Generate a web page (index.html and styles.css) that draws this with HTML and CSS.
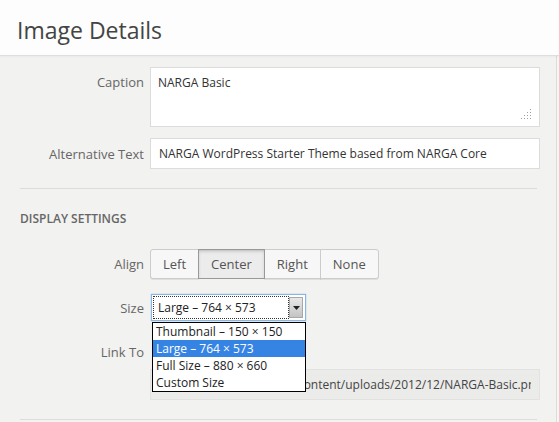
FILE: index.html
```html
<!DOCTYPE html>
<html lang="en">
<head>
<meta charset="utf-8">
<title>Image Details</title>
<link rel="stylesheet" href="styles.css">
</head>
<body>
<div class="frame">
  <header class="header">
    <h1 class="title">Image Details</h1>
  </header>
  <div class="body">
    <main class="pane">
      <div class="row row-caption">
        <label class="label label-top">Caption</label>
        <div class="textarea">
          <span class="field-text">NARGA Basic</span>
          <svg class="grip" width="11" height="11" viewBox="0 0 11 11">
            <g fill="#a0a0a0">
              <rect x="9" y="0" width="1" height="1"/>
              <rect x="9" y="3" width="1" height="1"/>
              <rect x="6" y="3" width="1" height="1"/>
              <rect x="9" y="6" width="1" height="1"/>
              <rect x="6" y="6" width="1" height="1"/>
              <rect x="3" y="6" width="1" height="1"/>
              <rect x="9" y="9" width="1" height="1"/>
              <rect x="6" y="9" width="1" height="1"/>
              <rect x="3" y="9" width="1" height="1"/>
              <rect x="0" y="9" width="1" height="1"/>
            </g>
          </svg>
        </div>
      </div>
      <div class="row row-alt">
        <label class="label">Alternative Text</label>
        <div class="input"><span class="field-text">NARGA WordPress Starter Theme based from NARGA Core</span></div>
      </div>

      <hr class="sep">

      <h3 class="section-title">Display Settings</h3>

      <div class="row row-align">
        <label class="label">Align</label>
        <div class="button-group">
          <span class="btn">Left</span>
          <span class="btn btn-active">Center</span>
          <span class="btn">Right</span>
          <span class="btn">None</span>
        </div>
      </div>

      <div class="row row-size">
        <label class="label">Size</label>
        <div class="select-wrap">
          <div class="select">
            <span class="select-focus">Large – 764 × 573</span>
            <span class="select-arrow">
              <svg width="7" height="4" viewBox="0 0 7 4"><path d="M0 0H7L3.5 4Z" fill="#222"/></svg>
            </span>
          </div>
          <ul class="dropdown">
            <li class="option">Thumbnail – 150 × 150</li>
            <li class="option option-selected">Large – 764 × 573</li>
            <li class="option">Full Size – 880 × 660</li>
            <li class="option">Custom Size</li>
          </ul>
        </div>
      </div>

      <div class="row row-link">
        <label class="label">Link To</label>
        <div class="link-select"></div>
      </div>
      <div class="row row-url">
        <span></span>
        <div class="input input-readonly"><span class="field-text url-text">http://localhost/blog/wp-content/uploads/2012/12/NARGA-Basic.png</span></div>
      </div>

      <hr class="sep sep-bottom">
    </main>
    <div class="edge"></div>
  </div>
</div>
</body>
</html>
```

FILE: styles.css
```css
* {
  box-sizing: border-box;
}

html, body {
  margin: 0;
  padding: 0;
}

body {
  font-family: "Open Sans", "Liberation Sans", sans-serif;
  font-size: 13px;
  color: #444;
  background: #f3f3f2;
}

.frame {
  width: 559px;
  height: 422px;
  overflow: hidden;
  display: flex;
  flex-direction: column;
}

.header {
  height: 56px;
  flex: none;
  background: #fcfdfc;
  border-bottom: 1px solid #dedede;
  box-shadow: 0 1px 2px rgba(0, 0, 0, 0.04);
  display: flex;
  align-items: center;
  padding-left: 17px;
  position: relative;
  z-index: 1;
}

.title {
  margin: 0;
  font-size: 23px;
  font-weight: 400;
  color: #444;
  line-height: 30px;
  padding-top: 5px;
}

.body {
  flex: 1;
  display: flex;
}

.pane {
  width: 557px;
  flex: none;
  background: #f2f2f0;
  border-right: 1px solid #dcdcdc;
  padding-top: 11px;
}

.edge {
  flex: 1;
  background: #f6f6f5;
}

.row {
  display: grid;
  grid-template-columns: 144px 390px;
  column-gap: 6px;
  align-items: center;
}

.label {
  text-align: right;
  color: #666;
  font-size: 13px;
  line-height: 18px;
}

.row-caption {
  align-items: start;
}

.label-top {
  padding-top: 6px;
}

.textarea {
  height: 60px;
  background: #fff;
  border: 1px solid #dcdcdc;
  padding: 6px 7px;
  display: flex;
  flex-direction: column;
  justify-content: space-between;
}

.field-text {
  color: #333;
  font-size: 12px;
  line-height: 18px;
  white-space: nowrap;
}

.grip {
  align-self: flex-end;
  display: block;
}

.row-alt {
  margin-top: 11px;
}

.input {
  height: 31px;
  background: #fff;
  border: 1px solid #dcdcdc;
  padding: 0 8px;
  display: flex;
  align-items: center;
  overflow: hidden;
}

.input-readonly {
  background: #ebebea;
  border-color: #e2e2e1;
}

.url-text {
  color: #444;
  overflow: hidden;
}

.sep {
  margin: 19px 0 0 20px;
  width: 517px;
  height: 0;
  border: 0;
  border-top: 1px solid #dcdcdc;
}

.section-title {
  margin: 21px 0 0 20px;
  font-size: 12px;
  font-weight: 600;
  text-transform: uppercase;
  color: #666;
  line-height: 17px;
}

.row-align {
  margin-top: 22px;
}

.button-group {
  display: flex;
}

.btn {
  height: 30px;
  padding: 0 12px;
  display: flex;
  align-items: center;
  background: #f7f7f7;
  border: 1px solid #cccccc;
  box-shadow: 0 1px 0 rgba(0, 0, 0, 0.08);
  color: #555;
  font-size: 13px;
  margin-left: -1px;
}

.btn:first-child {
  margin-left: 0;
  border-radius: 3px 0 0 3px;
}

.btn:last-child {
  border-radius: 0 3px 3px 0;
}

.btn-active {
  background: #ececec;
  border-color: #999;
  box-shadow: inset 0 2px 5px -3px rgba(0, 0, 0, 0.5);
  position: relative;
  z-index: 1;
}

.row-size {
  margin-top: 15px;
}

.select-wrap {
  position: relative;
  width: 155px;
  margin-left: 1px;
}

.select {
  height: 27px;
  background: #fff;
  border: 1px solid #8ab6e6;
  box-shadow: 0 0 1px rgba(30, 140, 190, 0.6);
  padding: 1px;
  display: flex;
  align-items: stretch;
}

.select-focus {
  flex: 1;
  border: 1px dotted #333;
  padding-left: 4px;
  display: flex;
  align-items: center;
  color: #222;
  font-size: 12px;
  white-space: nowrap;
  overflow: hidden;
}

.select-arrow {
  width: 14px;
  margin: 1px 1px 1px 0;
  background: linear-gradient(#e8e8e8, #c4c4c4);
  border: 1px solid #a8a8a8;
  display: flex;
  align-items: center;
  justify-content: center;
}

.dropdown {
  position: absolute;
  left: 1px;
  top: 28px;
  width: 154px;
  margin: 0;
  padding: 0;
  list-style: none;
  background: #fff;
  border: 1px solid #000;
  z-index: 5;
}

.option {
  height: 17px;
  line-height: 17px;
  padding-left: 3px;
  color: #222;
  font-size: 12px;
  white-space: nowrap;
}

.option-selected {
  background: #3584e4;
  color: #fff;
}

.row-link {
  margin-top: 17px;
}

.link-select {
  height: 27px;
  width: 150px;
}

.row-url {
  margin-top: 4px;
}

.sep-bottom {
  margin-top: 19px;
}
```
